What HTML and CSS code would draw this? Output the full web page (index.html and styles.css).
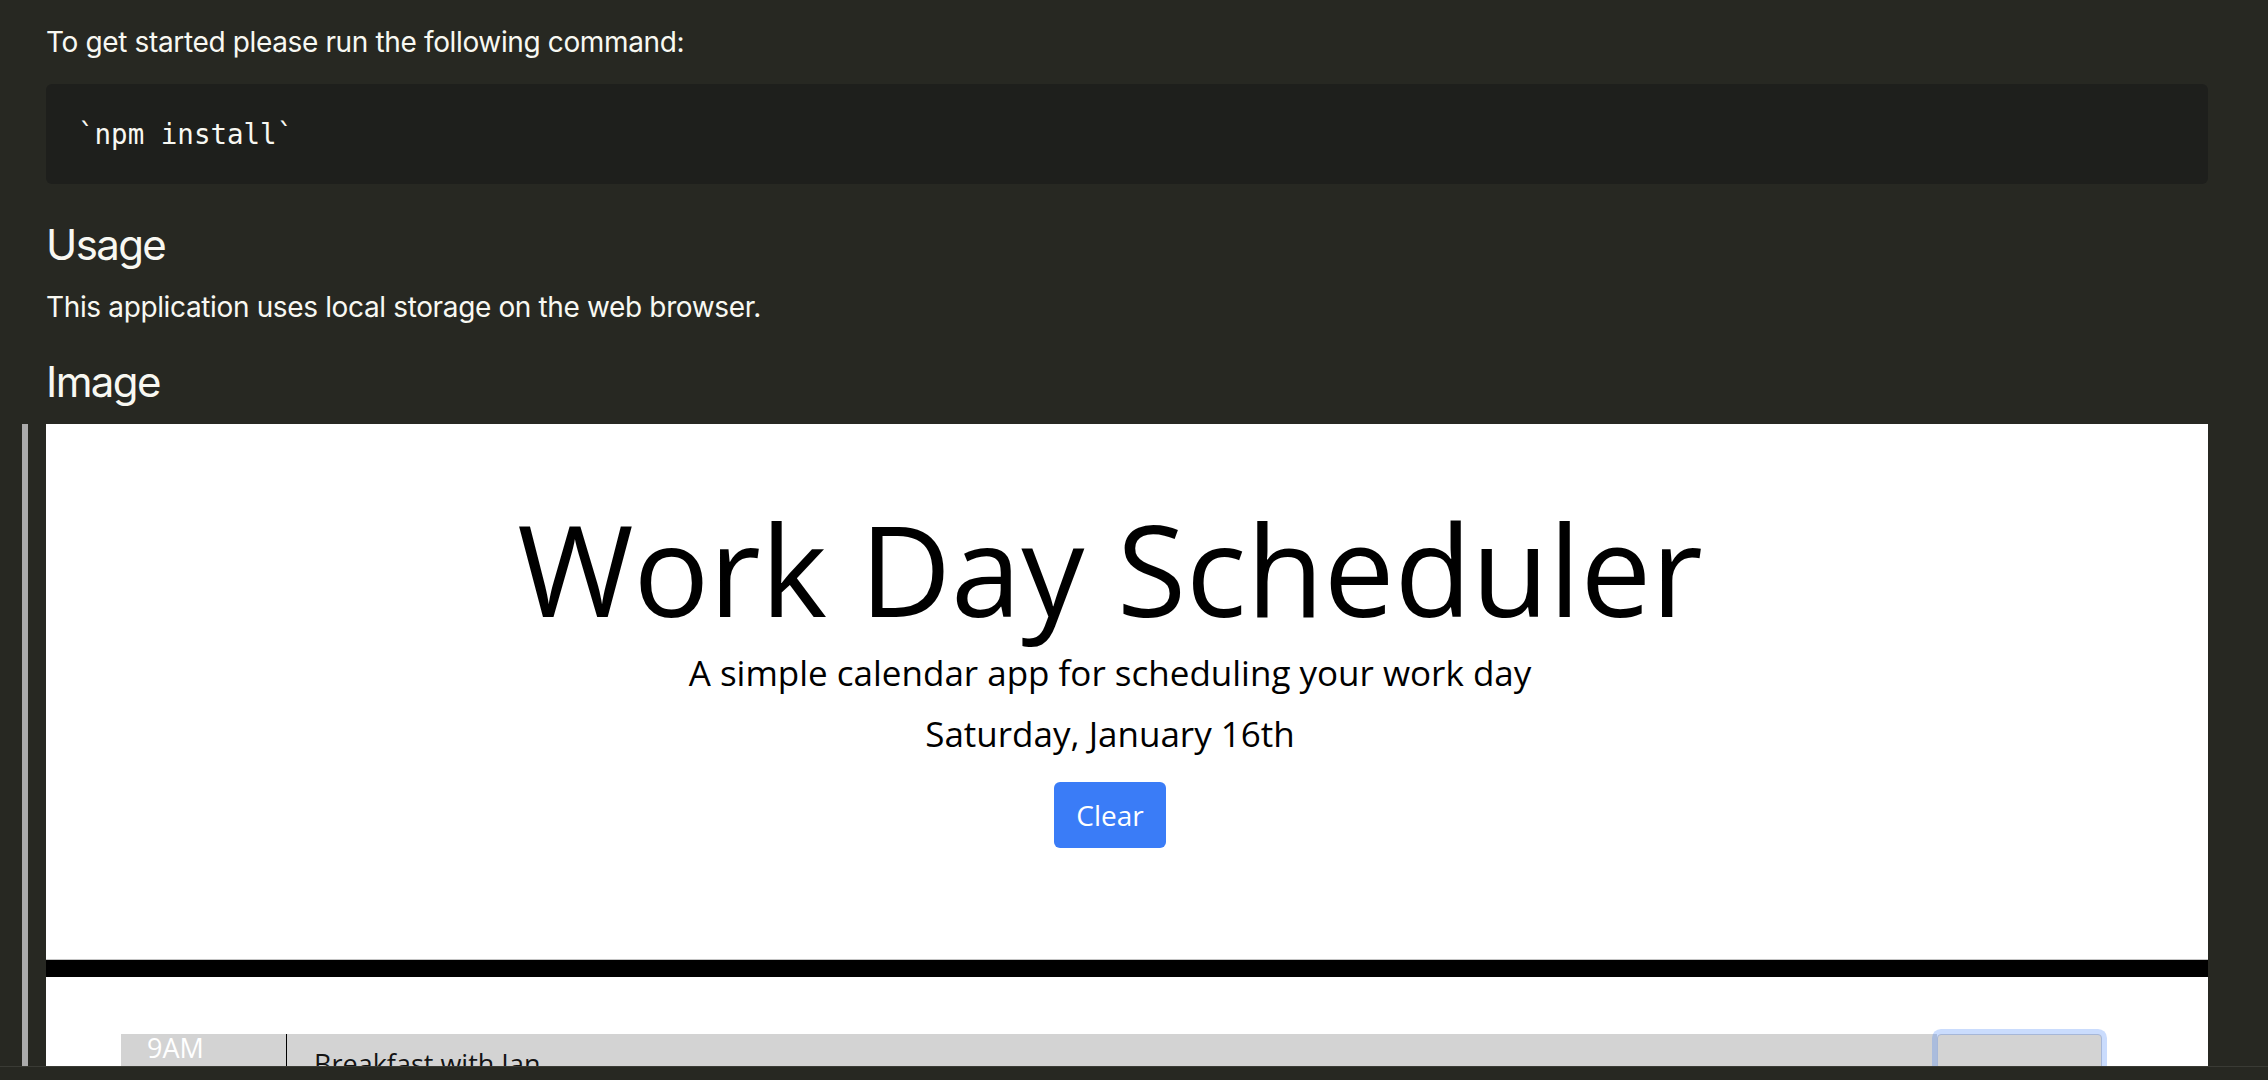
FILE: index.html
```html
<!DOCTYPE html>
<html lang="en">
<head>
<meta charset="utf-8">
<title>README preview</title>
<link rel="stylesheet" href="styles.css">
</head>
<body>
<div class="viewport">
  <main class="preview">
    <p class="para first">To get started please run the following command:</p>
    <pre class="code"><code>`npm install`</code></pre>
    <h2 class="heading usage">Usage</h2>
    <p class="para second">This application uses local storage on the web browser.</p>
    <h2 class="heading image-h">Image</h2>
    <div class="shot">
      <header class="jumbo">
        <h1 class="title">Work Day Scheduler</h1>
        <p class="lead">A simple calendar app for scheduling your work day</p>
        <p class="day">Saturday, January 16th</p>
        <button class="clear" type="button">Clear</button>
      </header>
      <div class="container">
        <div class="row past">
          <div class="hour">9AM</div>
          <div class="desc">Breakfast with Ian</div>
          <div class="save"></div>
        </div>
      </div>
    </div>
  </main>
  <div class="statusline"></div>
</div>
</body>
</html>
```

FILE: styles.css
```css
html, body {
  margin: 0;
  padding: 0;
}

body {
  background: #272822;
  color: #f8f8f2;
  font-family: Inter, "Noto Sans", sans-serif;
  overflow: hidden;
}

.viewport {
  height: 1080px;
  display: flex;
  flex-direction: column;
}

.preview {
  flex: none;
  height: 1066px;
  overflow: hidden;
  box-sizing: border-box;
  padding: 0 60px 0 46px;
}

.statusline {
  flex: 1;
  border-top: 1px solid #3a3b35;
  background: #272822;
}

.para {
  font-size: 28px;
  line-height: 44px;
  letter-spacing: -0.36px;
  margin: 0;
}

.first {
  margin-top: 20px;
}

.second {
  margin-top: 14px;
}

.code {
  margin: 20px 0 0;
  background: #1e1f1c;
  border-radius: 6px;
  padding: 32px;
  font-family: "DejaVu Sans Mono", monospace;
  font-size: 27.5px;
  line-height: 36px;
  color: #f8f8f2;
}

.heading {
  font-size: 42px;
  line-height: 52px;
  font-weight: 400;
  letter-spacing: -1.6px;
  margin: 0;
}

.usage {
  margin-top: 35px;
}

.image-h {
  margin-top: 27px;
}

.shot {
  margin-top: 16px;
  background: #ffffff;
  position: relative;
  height: 760px;
  font-family: "Open Sans", sans-serif;
  color: #000;
}

.shot::before {
  content: "";
  position: absolute;
  left: -24px;
  top: 0;
  bottom: 0;
  width: 6px;
  background: #ababab;
}

.jumbo {
  box-sizing: border-box;
  height: 553px;
  padding: 68px 34px 0 0;
  border-bottom: 17px solid #000;
  box-shadow: inset 0 -1px 0 #c4c4c4;
  display: flex;
  flex-direction: column;
  align-items: center;
  text-align: center;
}

.title {
  margin: 0;
  font-size: 126px;
  line-height: 152px;
  font-weight: 400;
}

.lead {
  margin: 8px 0 0;
  font-size: 35px;
  line-height: 42px;
}

.day {
  margin: 19px 0 0;
  font-size: 35px;
  line-height: 42px;
}

.clear {
  margin-top: 27px;
  width: 112px;
  height: 66px;
  padding: 0;
  border: none;
  border-radius: 6px;
  background: #3a7cf7;
  color: #fff;
  font-family: "Open Sans", sans-serif;
  font-size: 28px;
  line-height: 66px;
}

.container {
  margin-top: 57px;
  padding: 0 106px 0 75px;
}

.row {
  display: grid;
  grid-template-columns: 166px 1fr 165px;
  height: 120px;
}

.hour {
  background: #d3d3d3;
  color: #fff;
  border-right: 1px solid #000;
  padding: 2px 0 0 26px;
  font-size: 27px;
  line-height: 24px;
}

.desc {
  background: #d3d3d3;
  color: #141414;
  padding: 18px 0 0 27px;
  font-size: 27px;
  line-height: 24px;
}

.save {
  background: #d3d3d3;
  border: 1px solid #a6b7d8;
  border-radius: 4px;
  box-shadow: 0 0 0 5px rgba(59, 125, 246, 0.27);
}
```
